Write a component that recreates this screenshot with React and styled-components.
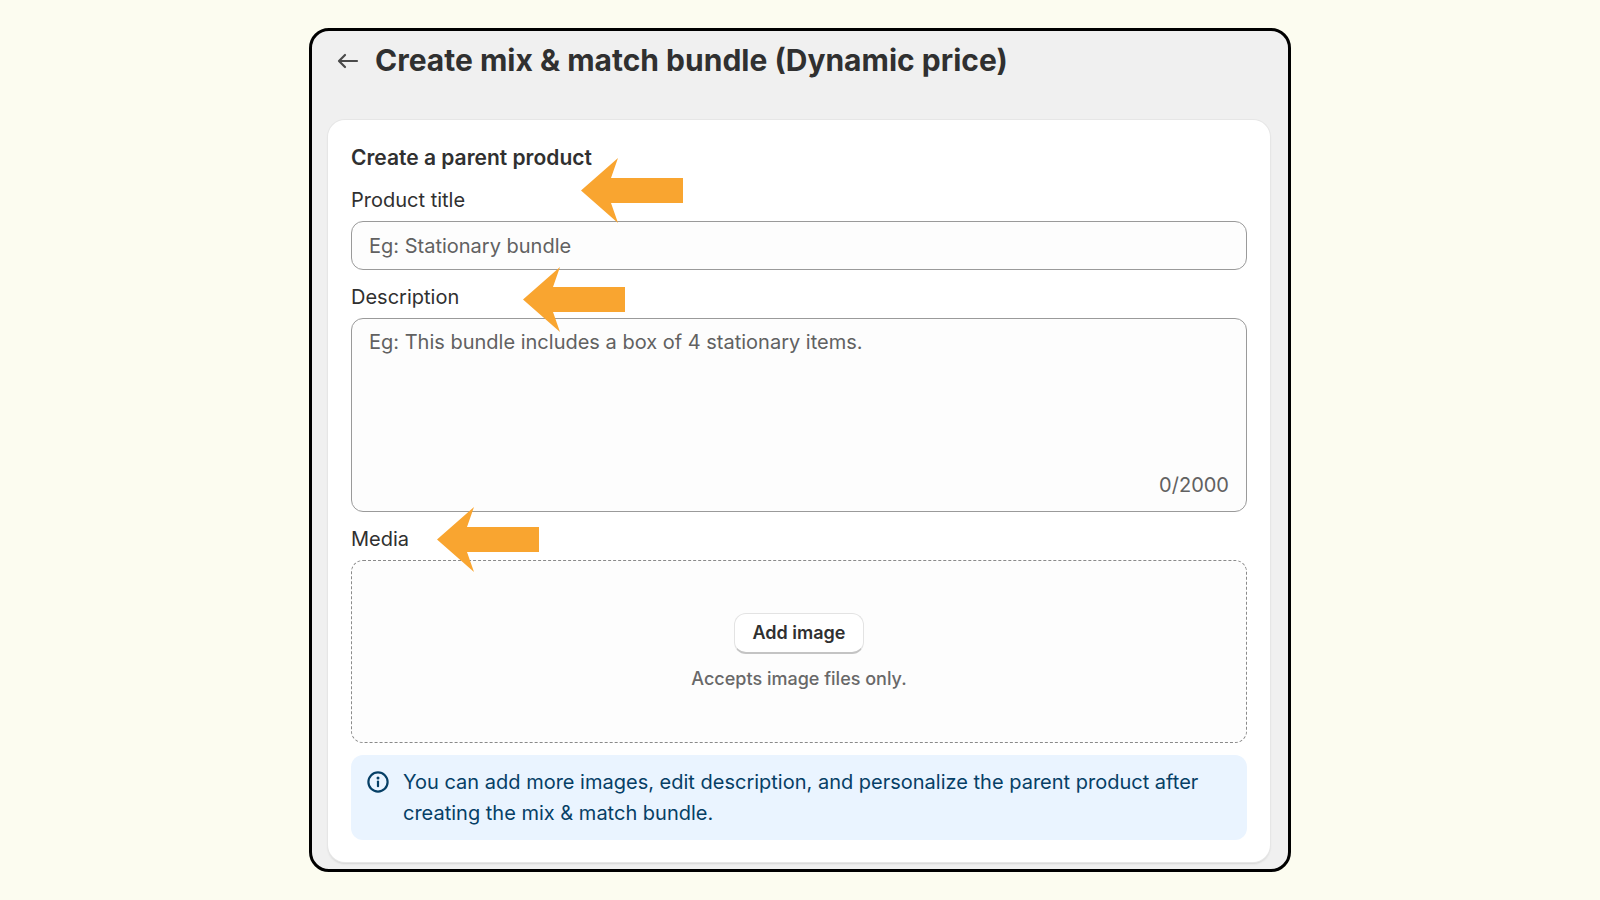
import { useRef, useState } from "react";
import styled, { createGlobalStyle } from "styled-components";

const MAX_LENGTH = 2000;

const BackIcon = () => (
  <svg width="22" height="22" viewBox="0 0 22 22" fill="none" aria-hidden="true">
    <path
      d="M20 12H2.5M8 6L2 12L8 18"
      stroke="currentColor"
      strokeWidth="2.2"
      strokeLinecap="round"
      strokeLinejoin="round"
    />
  </svg>
);

const InfoIcon = () => (
  <svg width="22" height="22" viewBox="0 0 22 22" fill="none" aria-hidden="true">
    <circle cx="11" cy="11" r="9.6" stroke="currentColor" strokeWidth="2.2" />
    <path
      d="M11 10.6V15.2"
      stroke="currentColor"
      strokeWidth="2.2"
      strokeLinecap="round"
    />
    <circle cx="11" cy="6.9" r="1.5" fill="currentColor" />
  </svg>
);

const Pointer = ({ left, top }) => (
  <PointerSvg $left={left} $top={top} viewBox="0 0 102 65" aria-hidden="true">
    <path d="M0 32.5L37 0L30 20H102V45H30L37 65Z" fill="#f9a530" />
  </PointerSvg>
);

const App = () => {
  const [title, setTitle] = useState("");
  const [description, setDescription] = useState("");
  const fileRef = useRef(null);

  const handleAddImage = () => {
    fileRef.current.click();
  };

  return (
    <Page>
      <GlobalStyle />
      <Frame>
        <Header>
          <BackButton type="button" aria-label="Back">
            <BackIcon />
          </BackButton>
          <PageTitle>Create mix &amp; match bundle (Dynamic price)</PageTitle>
        </Header>
        <Card>
          <CardTitle>Create a parent product</CardTitle>
          <Field>
            <Label htmlFor="title">Product title</Label>
            <Input
              id="title"
              type="text"
              placeholder="Eg: Stationary bundle"
              value={title}
              onChange={(e) => setTitle(e.target.value)}
            />
            <Pointer left={230} top={-27} />
          </Field>
          <Field>
            <Label htmlFor="description">Description</Label>
            <TextArea
              id="description"
              placeholder="Eg: This bundle includes a box of 4 stationary items."
              maxLength={MAX_LENGTH}
              value={description}
              onChange={(e) => setDescription(e.target.value)}
            />
            <Counter>
              {description.length}/{MAX_LENGTH}
            </Counter>
            <Pointer left={172} top={-15} />
          </Field>
          <Field>
            <Label htmlFor="media">Media</Label>
            <DropZone>
              <input id="media" type="file" accept="image/*" hidden ref={fileRef} />
              <AddButton type="button" onClick={handleAddImage}>
                Add image
              </AddButton>
              <Hint>Accepts image files only.</Hint>
            </DropZone>
            <Pointer left={86} top={-17} />
          </Field>
          <Banner>
            <BannerIcon>
              <InfoIcon />
            </BannerIcon>
            <p>
              You can add more images, edit description, and personalize the
              parent product after creating the mix &amp; match bundle.
            </p>
          </Banner>
        </Card>
      </Frame>
    </Page>
  );
};

export default App;

const GlobalStyle = createGlobalStyle`
  *, *::before, *::after {
    box-sizing: border-box;
  }
  body {
    margin: 0;
    background-color: #fcfcf0;
    color: #303030;
    font-family: Inter, "Liberation Sans", sans-serif;
    font-size: 20px;
    line-height: 30px;
  }
  h1, h2, p {
    margin: 0;
  }
  button, input, textarea {
    font: inherit;
    color: inherit;
  }
`;

const Page = styled.div`
  display: flex;
  justify-content: center;
  padding: 28px 16px;
`;

const Frame = styled.main`
  width: 100%;
  max-width: 982px;
  padding: 0 18px 7px 16px;
  border: 3px solid #000;
  border-radius: 20px;
  background-color: #f0f0f0;
`;

const Header = styled.header`
  display: flex;
  align-items: center;
  gap: 16px;
  padding: 9px 0 40px 9px;
`;

const BackButton = styled.button`
  display: flex;
  padding: 0;
  border: none;
  background: none;
  color: #4a4a4a;
  cursor: pointer;
`;

const PageTitle = styled.h1`
  font-size: 30px;
  font-weight: 650;
  line-height: 40px;
`;

const Card = styled.section`
  display: flex;
  flex-direction: column;
  gap: 12px;
  padding: 23px 23px 22px;
  border-radius: 17px;
  background-color: #fff;
  box-shadow: 0 0 0 1px #e6e6e6, 0 2px 2px #d4d4d4;
`;

const CardTitle = styled.h2`
  font-size: 21px;
  font-weight: 600;
  line-height: 30px;
`;

const Field = styled.div`
  position: relative;
  display: flex;
  flex-direction: column;
  gap: 6px;
`;

const Label = styled.label`
  align-self: flex-start;
`;

const Input = styled.input`
  width: 100%;
  height: 49px;
  padding: 0 17px;
  border: 1px solid #9a9a9a;
  border-radius: 12px;
  background-color: #fdfdfd;
  &::placeholder {
    color: #616161;
    opacity: 1;
  }
`;

const TextArea = styled.textarea`
  display: block;
  width: 100%;
  height: 194px;
  padding: 8px 17px;
  border: 1px solid #9a9a9a;
  border-radius: 12px;
  background-color: #fdfdfd;
  resize: none;
  &::placeholder {
    color: #616161;
    opacity: 1;
  }
`;

const Counter = styled.span`
  position: absolute;
  right: 18px;
  bottom: 12px;
  color: #616161;
`;

const DropZone = styled.div`
  display: flex;
  flex-direction: column;
  align-items: center;
  gap: 10px;
  height: 183px;
  padding-top: 52px;
  border: 1px dashed #8a8a8a;
  border-radius: 12px;
  background-color: #fdfdfd;
`;

const AddButton = styled.button`
  height: 41px;
  padding: 0 18px;
  border: 1px solid #e3e3e3;
  border-bottom: 2px solid #c4c4c4;
  border-radius: 12px;
  background-color: #fff;
  font-size: 18px;
  font-weight: 600;
  cursor: pointer;
`;

const Hint = styled.p`
  color: #686868;
  font-size: 18px;
  font-weight: 500;
`;

const Banner = styled.div`
  display: flex;
  gap: 14px;
  padding: 12px 16px 11px;
  border-radius: 12px;
  background-color: #eaf4ff;
  color: #063f66;
  line-height: 31px;
`;

const BannerIcon = styled.span`
  display: flex;
  flex-shrink: 0;
  align-items: center;
  height: 30px;
`;

const PointerSvg = styled.svg`
  position: absolute;
  left: ${(props) => props.$left}px;
  top: ${(props) => props.$top}px;
  width: 102px;
  height: 65px;
  pointer-events: none;
`;
